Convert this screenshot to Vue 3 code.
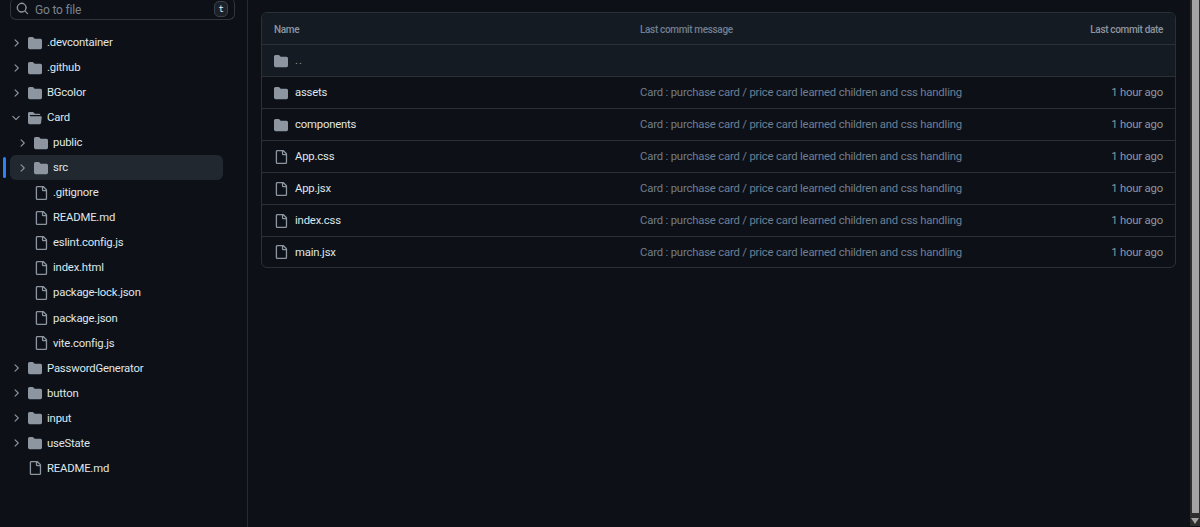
<script setup>
const tree = [
  { name: '.devcontainer', depth: 0, type: 'dir' },
  { name: '.github', depth: 0, type: 'dir' },
  { name: 'BGcolor', depth: 0, type: 'dir' },
  { name: 'Card', depth: 0, type: 'open' },
  { name: 'public', depth: 1, type: 'dir' },
  { name: 'src', depth: 1, type: 'dir', selected: true },
  { name: '.gitignore', depth: 1, type: 'file' },
  { name: 'README.md', depth: 1, type: 'file' },
  { name: 'eslint.config.js', depth: 1, type: 'file' },
  { name: 'index.html', depth: 1, type: 'file' },
  { name: 'package-lock.json', depth: 1, type: 'file' },
  { name: 'package.json', depth: 1, type: 'file' },
  { name: 'vite.config.js', depth: 1, type: 'file' },
  { name: 'PasswordGenerator', depth: 0, type: 'dir' },
  { name: 'button', depth: 0, type: 'dir' },
  { name: 'input', depth: 0, type: 'dir' },
  { name: 'useState', depth: 0, type: 'dir' },
  { name: 'README.md', depth: 0, type: 'file' },
]

const files = [
  { name: 'assets', dir: true },
  { name: 'components', dir: true },
  { name: 'App.css' },
  { name: 'App.jsx' },
  { name: 'index.css' },
  { name: 'main.jsx' },
]

const commit = 'Card : purchase card / price card learned children and css handling'

const folderPath = 'M1.75 1A1.75 1.75 0 0 0 0 2.75v10.5C0 14.216.784 15 1.75 15h12.5A1.75 1.75 0 0 0 16 13.25v-8.5A1.75 1.75 0 0 0 14.25 3H7.5a.25.25 0 0 1-.2-.1l-.9-1.2C6.07 1.26 5.55 1 5 1H1.75Z'
const openPath = 'M.513 1.513A1.75 1.75 0 0 1 1.75 1h3.5c.55 0 1.07.26 1.4.7l.9 1.2a.25.25 0 0 0 .2.1H13a1 1 0 0 1 1 1v.5H2.75a.75.75 0 0 0 0 1.5h11.978a1 1 0 0 1 .994 1.117L15 13.25A1.75 1.75 0 0 1 13.25 15H1.75A1.75 1.75 0 0 1 0 13.25V2.75c0-.464.184-.91.513-1.237Z'
const filePath = 'M2 1.75C2 .784 2.784 0 3.75 0h6.586c.464 0 .909.184 1.237.513l2.914 2.914c.329.328.513.773.513 1.237v9.586A1.75 1.75 0 0 1 13.25 16h-9.5A1.75 1.75 0 0 1 2 14.25Zm1.75-.25a.25.25 0 0 0-.25.25v12.5c0 .138.112.25.25.25h9.5a.25.25 0 0 0 .25-.25V6h-2.75A1.75 1.75 0 0 1 9 4.25V1.5Zm6.75.062V4.25c0 .138.112.25.25.25h2.688l-.011-.013-2.914-2.914-.013-.011Z'
const rightPath = 'M6.22 3.22a.75.75 0 0 1 1.06 0l4.25 4.25a.75.75 0 0 1 0 1.06l-4.25 4.25a.751.751 0 0 1-1.042-.018.751.751 0 0 1-.018-1.042L9.94 8 6.22 4.28a.75.75 0 0 1 0-1.06Z'
const downPath = 'M12.78 5.22a.749.749 0 0 1 0 1.06l-4.25 4.25a.749.749 0 0 1-1.06 0L3.22 6.28a.749.749 0 1 1 1.06-1.06L8 8.939l3.72-3.719a.749.749 0 0 1 1.06 0Z'
const searchPath = 'M10.68 11.74a6 6 0 0 1-7.922-8.982 6 6 0 0 1 8.982 7.922l3.04 3.04a.749.749 0 0 1-.326 1.275.749.749 0 0 1-.734-.215ZM11.5 7a4.499 4.499 0 1 0-8.997 0A4.499 4.499 0 0 0 11.5 7Z'

const iconFor = (type) => (type === 'open' ? openPath : type === 'dir' ? folderPath : filePath)
</script>

<template>
  <div class="page">
    <aside class="sidebar">
      <div class="search">
        <svg class="search-icon" viewBox="0 0 16 16"><path :d="searchPath" /></svg>
        <span class="search-text">Go to file</span>
        <kbd class="key">t</kbd>
      </div>

      <ul class="tree">
        <li v-for="(item, i) in tree" :key="i" class="tree-row" :class="{ selected: item.selected, nested: item.depth > 0 }">
          <span class="mark"></span>
          <svg v-if="item.type !== 'file'" class="chevron" viewBox="0 0 16 16">
            <path :d="item.type === 'open' ? downPath : rightPath" />
          </svg>
          <span v-else class="chevron"></span>
          <svg class="tree-icon" viewBox="0 0 16 16"><path :d="iconFor(item.type)" /></svg>
          <span class="tree-name">{{ item.name }}</span>
        </li>
      </ul>
    </aside>

    <main class="content">
      <div class="table">
        <div class="row head">
          <span class="col-name">Name</span>
          <span class="col-msg">Last commit message</span>
          <span class="col-date">Last commit date</span>
        </div>
        <div class="row parent">
          <span class="col-name">
            <svg class="file-icon" viewBox="0 0 16 16"><path :d="folderPath" /></svg>
            <span class="dots">..</span>
          </span>
        </div>
        <div v-for="f in files" :key="f.name" class="row">
          <span class="col-name">
            <svg class="file-icon" viewBox="0 0 16 16"><path :d="f.dir ? folderPath : filePath" /></svg>
            <span class="file-name">{{ f.name }}</span>
          </span>
          <span class="col-msg">{{ commit }}</span>
          <span class="col-date">1 hour ago</span>
        </div>
      </div>
    </main>

    <div class="scrollbar">
      <div class="thumb"></div>
      <div class="arrow"></div>
    </div>
  </div>
</template>

<style>
html, body {
  margin: 0;
  background: #0d1117;
}
</style>

<style scoped>
.page {
  display: flex;
  height: 527px;
  overflow: hidden;
  background: #0d1117;
  color: #e6edf3;
  font-family: Roboto, "Noto Sans", sans-serif;
  font-size: 11.3px;
  letter-spacing: -0.18px;
}

.sidebar {
  width: 247px;
  flex: none;
  border-right: 1px solid #262c34;
}

.search {
  display: flex;
  align-items: center;
  box-sizing: border-box;
  width: 225px;
  height: 22px;
  margin: -2px 0 0 10px;
  padding: 0 6px 0 5px;
  border: 1px solid #30363d;
  border-top: 0;
  border-radius: 6px;
}
.search-icon {
  width: 13px;
  height: 13px;
  fill: #8d96a0;
}
.search-text {
  flex: 1;
  margin-left: 6px;
  padding-top: 2px;
  color: #7a838d;
  font-size: 12px;
}
.key {
  width: 12px;
  height: 14px;
  border: 1px solid #3a414a;
  border-radius: 5px;
  background: #1c2128;
  color: #e6edf3;
  font-family: "DejaVu Sans Mono", monospace;
  font-size: 9px;
  line-height: 14px;
  text-align: center;
}

.tree {
  list-style: none;
  margin: 10px 0 0;
  padding: 0;
}
.tree-row {
  position: relative;
  display: flex;
  align-items: center;
  height: 25.06px;
  margin: 0 24px 0 10px;
  border-radius: 6px;
}
.tree-row.nested {
  padding-left: 6px;
}
.tree-row.selected {
  background: #212830;
}
.mark {
  display: none;
}
.tree-row.selected .mark {
  display: block;
  position: absolute;
  left: -7px;
  top: 2px;
  width: 3px;
  height: 21px;
  border-radius: 2px;
  background: #2f81f7;
}
.chevron {
  flex: none;
  width: 12px;
  height: 12px;
  fill: #8d96a0;
}
.tree-icon {
  flex: none;
  width: 14px;
  height: 14px;
  margin-left: 6px;
  fill: #8d96a0;
}
.tree-name {
  margin-left: 5px;
  color: #dfe6ec;
  white-space: nowrap;
}

.content {
  flex: 1;
  min-width: 0;
  padding: 12px 14px 0 13px;
}

.table {
  border: 1px solid #2a3038;
  border-radius: 6px;
  overflow: hidden;
}
.row {
  display: flex;
  align-items: center;
  box-sizing: border-box;
  height: 32px;
  padding: 0 12px;
  border-top: 1px solid #2a3038;
}
.row:last-child {
  height: 31px;
}
.row.head {
  height: 31px;
  padding-top: 1px;
  border-top: 0;
  background: #151b23;
  color: #8d96a0;
  font-size: 10px;
  font-weight: 500;
  letter-spacing: -0.34px;
}
.row.parent {
  background: #151b23;
}
.col-name {
  display: flex;
  align-items: center;
  width: 366px;
  flex: none;
}
.col-msg {
  flex: 1;
  color: #6f7f92;
}
.col-date {
  color: #8d96a0;
}
.file-icon {
  flex: none;
  width: 14px;
  height: 14px;
  margin-right: 7px;
  fill: #8d96a0;
}
.file-name {
  color: #dfe6ec;
}
.dots {
  color: #8d96a0;
  letter-spacing: 1px;
}

.scrollbar {
  display: flex;
  flex-direction: column;
  align-items: center;
  flex: none;
  box-sizing: border-box;
  width: 10px;
  height: 526px;
  background: #2e2e2e;
  padding: 0 1px;
}
.thumb {
  width: 7px;
  height: 513px;
  background: #a3a3a3;
}
.arrow {
  width: 0;
  height: 0;
  margin-top: 5px;
  border-left: 4px solid transparent;
  border-right: 4px solid transparent;
  border-top: 6px solid #a3a3a3;
}
</style>
